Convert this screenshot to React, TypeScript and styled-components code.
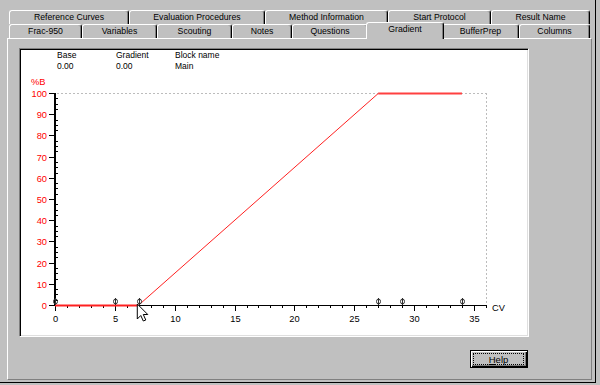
import styled, { createGlobalStyle } from 'styled-components';

const GlobalStyle = createGlobalStyle`
  html, body {
    margin: 0;
    padding: 0;
    background: #c0c0c0;
  }
  body {
    font-family: "Liberation Sans", Arial, sans-serif;
    font-size: 8.5px;
    color: #000;
  }
`;

const Window = styled.div`
  width: 600px;
  height: 385px;
  overflow: hidden;
  background: #c0c0c0;
`;

const Frame = styled.div`
  width: 596px;
  height: 383px;
  box-sizing: border-box;
  border-right: 1px solid #000;
  border-bottom: 1px solid #000;
  padding: 10px 0 0 7px;
`;

const TabRow = styled.div`
  display: flex;
  height: 14px;
  margin-left: 2px;
`;

const Tab = styled.div<{ $w: number; $selected?: boolean }>`
  box-sizing: border-box;
  width: ${(p) => (p.$selected ? p.$w + 4 : p.$w)}px;
  height: ${(p) => (p.$selected ? 17 : 14)}px;
  margin: ${(p) => (p.$selected ? '-2px -2px 0' : '0')};
  position: relative;
  z-index: ${(p) => (p.$selected ? 2 : 1)};
  background: #c0c0c0;
  border-top: 1px solid #fff;
  border-left: 1px solid #fff;
  border-right: 1px solid #000;
  border-radius: 3px 3px 0 0;
  box-shadow: inset -1px 0 0 #808080;
  text-align: center;
  font-size: 8.7px;
  line-height: 13px;
  white-space: nowrap;
`;

const Panel = styled.div`
  box-sizing: border-box;
  width: 585px;
  height: 342px;
  border-top: 1px solid #fff;
  border-left: 1px solid #fff;
  border-right: 1px solid #808080;
  border-bottom: 1px solid #808080;
  padding: 9px 0 0 11px;
`;

const ChartBox = styled.div`
  box-sizing: border-box;
  width: 510px;
  height: 289px;
  background: #fff;
  border-top: 1px solid #808080;
  border-left: 1px solid #808080;
  border-right: 1px solid #fff;
  border-bottom: 1px solid #fff;
  box-shadow: inset 1px 1px 0 #000, inset -1px -1px 0 #dfdfdf;
`;

const Header = styled.div`
  display: grid;
  grid-template-columns: 59px 59px auto;
  padding: 1px 0 0 37px;
  line-height: 11px;
  height: 21px;
`;

const Plot = styled.svg`
  display: block;
  font-family: "Liberation Sans", Arial, sans-serif;
`;

const Footer = styled.div`
  width: 510px;
  display: flex;
  justify-content: flex-end;
  margin-top: 13px;
  padding-right: 1px;
  box-sizing: border-box;
`;

const Button = styled.button`
  box-sizing: border-box;
  width: 58px;
  height: 18px;
  padding: 0;
  background: #c0c0c0;
  border: 1px solid #000;
  box-shadow: inset 1px 1px 0 #fff, inset -1px -1px 0 #000, inset -2px -2px 0 #808080;
  font-family: "Liberation Sans", Arial, sans-serif;
  font-size: 9.5px;
  color: #000;
  display: flex;
`;

const Focus = styled.span`
  flex: 1;
  margin: 2px 3px 2px 2px;
  border: 1px dotted #000;
  line-height: 12px;
  text-align: center;
  u {
    text-decoration: underline;
  }
`;

const row1 = [
  { label: 'Reference Curves', w: 120 },
  { label: 'Evaluation Procedures', w: 136 },
  { label: 'Method Information', w: 123 },
  { label: 'Start Protocol', w: 103 },
  { label: 'Result Name', w: 99 },
];

const row2 = [
  { label: 'Frac-950', w: 73 },
  { label: 'Variables', w: 75 },
  { label: 'Scouting', w: 75 },
  { label: 'Notes', w: 60 },
  { label: 'Questions', w: 76 },
  { label: 'Gradient', w: 74 },
  { label: 'BufferPrep', w: 77 },
  { label: 'Columns', w: 71 },
];

const X0 = 35;
const Y0 = 234;
const Y100 = 22;
const UX = 11.97;
const UY = (Y0 - Y100) / 100;
const xs = (v: number) => X0 + v * UX;
const ys = (v: number) => Y0 - v * UY;
const RIGHT = 466;

function GradientChart() {
  const yMajor = Array.from({ length: 11 }, (_, i) => i * 10);
  const yMinor = Array.from({ length: 41 }, (_, i) => i * 2.5).filter((v) => v % 10 !== 0);
  const xMinor = Array.from({ length: 37 }, (_, i) => i);
  const xMajor = Array.from({ length: 8 }, (_, i) => i * 5);
  const markers = [0, 5, 7, 27, 29, 34];

  return (
    <Plot width={506} height={263} viewBox="0 0 506 263">
      {/* dotted frame */}
      <line x1={X0 + 2} y1={Y100 + 0.5} x2={RIGHT} y2={Y100 + 0.5} stroke="#bcbcbc" strokeDasharray="2 2" />
      <line x1={RIGHT + 0.5} y1={Y100} x2={RIGHT + 0.5} y2={Y0} stroke="#bcbcbc" strokeDasharray="2 2" />

      {/* y axis */}
      <rect x={34} y={Y100} width={2} height={Y0 - Y100 + 1} fill="#000" />
      {yMajor.map((v) => (
        <g key={v}>
          <line x1={29} y1={Math.round(ys(v)) + 0.5} x2={34} y2={Math.round(ys(v)) + 0.5} stroke="#000" />
          <text x={27} y={Math.round(ys(v)) + 3.5} fontSize={9.3} fill="#ff0000" textAnchor="end">
            {v}
          </text>
        </g>
      ))}
      {yMinor.map((v) => (
        <line key={v} x1={36} y1={Math.round(ys(v)) + 0.5} x2={38} y2={Math.round(ys(v)) + 0.5} stroke="#000" />
      ))}
      <text x={11} y={14} fontSize={9.3} fill="#ff0000">
        %B
      </text>

      {/* x axis */}
      <line x1={34} y1={Y0 + 0.5} x2={RIGHT} y2={Y0 + 0.5} stroke="#000" />
      {xMinor.map((v) => (
        <line key={v} x1={Math.round(xs(v)) + 0.5} y1={Y0} x2={Math.round(xs(v)) + 0.5} y2={Y0 + 3} stroke="#000" />
      ))}
      {xMajor.map((v) => (
        <g key={v}>
          <line x1={Math.round(xs(v)) + 0.5} y1={Y0} x2={Math.round(xs(v)) + 0.5} y2={Y0 + 6} stroke="#000" />
          <text x={Math.round(xs(v)) + 0.5} y={Y0 + 17} fontSize={9.3} fill="#000" textAnchor="middle">
            {v}
          </text>
        </g>
      ))}
      <text x={472} y={Y0 + 6} fontSize={9.3} fill="#000">
        CV
      </text>

      {/* gradient */}
      <line x1={X0} y1={Y0 + 0.5} x2={xs(7)} y2={Y0 + 0.5} stroke="#ff2020" strokeWidth={2} />
      <line x1={xs(7)} y1={Y0} x2={xs(27)} y2={Y100 + 0.5} stroke="#ff2020" strokeWidth={1} />
      <line x1={xs(27)} y1={Y100 + 0.5} x2={xs(34)} y2={Y100 + 0.5} stroke="#ff4040" strokeWidth={2} />

      {/* breakpoints */}
      {markers.map((v) => (
        <g key={v} stroke="#303030" fill="none">
          <line x1={Math.round(xs(v)) + 0.5} y1={Y0 - 7} x2={Math.round(xs(v)) + 0.5} y2={Y0} />
          <ellipse cx={Math.round(xs(v)) + 0.5} cy={Y0 - 3.5} rx={2} ry={2.5} />
        </g>
      ))}

      {/* mouse pointer */}
      <path
        d="M0 0 L0 15 L3.5 11.5 L6 17 L8.5 16 L6 10.5 L10.5 10.5 Z"
        transform={`translate(${xs(7) - 1.5} ${Y0 - 1})`}
        fill="#fff"
        stroke="#000"
        strokeWidth={1}
        strokeLinejoin="miter"
      />
    </Plot>
  );
}

export default function App() {
  return (
    <Window>
      <GlobalStyle />
      <Frame>
        <TabRow>
          {row1.map((t) => (
            <Tab key={t.label} $w={t.w}>
              {t.label}
            </Tab>
          ))}
        </TabRow>
        <TabRow>
          {row2.map((t) => (
            <Tab key={t.label} $w={t.w} $selected={t.label === 'Gradient'}>
              {t.label}
            </Tab>
          ))}
        </TabRow>
        <Panel>
          <ChartBox>
            <Header>
              <span>Base</span>
              <span>Gradient</span>
              <span>Block name</span>
              <span>0.00</span>
              <span>0.00</span>
              <span>Main</span>
            </Header>
            <GradientChart />
          </ChartBox>
          <Footer>
            <Button>
              <Focus>
                <u>H</u>elp
              </Focus>
            </Button>
          </Footer>
        </Panel>
      </Frame>
    </Window>
  );
}
